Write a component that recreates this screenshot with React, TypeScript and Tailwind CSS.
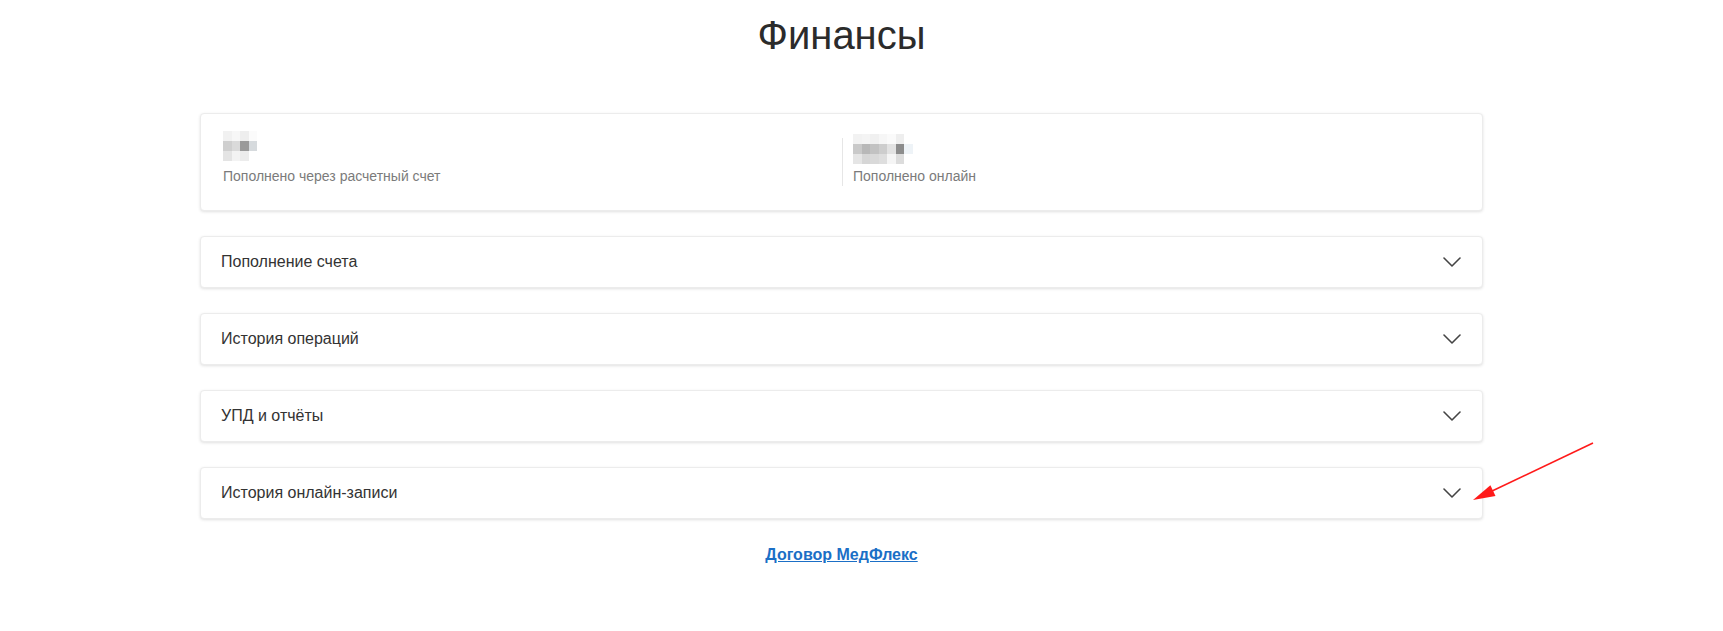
// blurred amounts, one row per line of pixel blocks
const blurLeft = [
  ["bg-[#f1f1f1]", "bg-[#f7f7f7]", "bg-[#eeeeee]", "bg-[#fbfbfb]"],
  ["bg-[#cfcfcf]", "bg-[#dadada]", "bg-[#9a9a9a]", "bg-[#d6dadd]"],
  ["bg-[#e4e4e4]", "bg-[#f3f3f3]", "bg-[#ececec]", "bg-white"],
];

const blurRight = [
  ["bg-[#f2f2f2]", "bg-[#f4f4f4]", "bg-[#f0f0f0]", "bg-[#f6f6f6]", "bg-[#fafafa]", "bg-[#eeeeee]", "bg-white"],
  ["bg-[#c9c9c9]", "bg-[#b8b8b8]", "bg-[#c2c2c2]", "bg-[#cdcdcd]", "bg-[#e2e2e2]", "bg-[#8c8c8c]", "bg-[#eef3f7]"],
  ["bg-[#e5e5e5]", "bg-[#d6d6d6]", "bg-[#d9d9d9]", "bg-[#dedede]", "bg-[#f5f5f5]", "bg-[#dcdcdc]", "bg-white"],
];

const sections = ["Пополнение счета", "История операций", "УПД и отчёты", "История онлайн-записи"];

function Blur({ rows }: { rows: string[][] }) {
  return (
    <div className="flex flex-col">
      {rows.map((row, i) => (
        <div key={i} className="flex">
          {row.map((c, j) => (
            <div key={j} className={`w-[8.5px] h-[10px] ${c}`} />
          ))}
        </div>
      ))}
    </div>
  );
}

function Chevron() {
  return (
    <svg width="18" height="10" viewBox="0 0 18 10" fill="none">
      <polyline points="1,1 9,9 17,1" stroke="#444444" strokeWidth="1.6" strokeLinecap="round" strokeLinejoin="round" />
    </svg>
  );
}

function Accordion({ title }: { title: string }) {
  return (
    <div className="h-[52px] flex items-center justify-between pl-[20px] pr-[21px] bg-white border border-[#ececec] rounded-[4px] shadow-[0_1px_3px_rgba(0,0,0,0.12)]">
      <span className="text-[16px] text-[#333333]">{title}</span>
      <Chevron />
    </div>
  );
}

export default function App() {
  return (
    <div
      className="relative min-h-[631px] bg-white flex justify-center pr-[40px]"
      style={{ fontFamily: '"Liberation Sans", Arial, sans-serif' }}
    >
      <div className="w-[1283px] flex flex-col">
        <h1 className="mt-[11px] text-center text-[40px] leading-[48px] font-normal text-[#2b2b2b]">Финансы</h1>

        <div className="mt-[54px] flex flex-col gap-[25px]">
          <div className="h-[98px] flex bg-white border border-[#ececec] rounded-[4px] shadow-[0_1px_3px_rgba(0,0,0,0.12)]">
            <div className="w-[641px] shrink-0 flex flex-col gap-[6px] pl-[22px] pt-[17px]">
              <Blur rows={blurLeft} />
              <span className="text-[14px] leading-[18px] text-[#7b7b7b]">Пополнено через расчетный счет</span>
            </div>
            <div className="flex-1 flex items-start">
              <div className="w-px h-[48px] mt-[24px] bg-[#e6e6e6]" />
              <div className="flex flex-col gap-[3px] pl-[10px] pt-[20px]">
                <Blur rows={blurRight} />
                <span className="text-[14px] leading-[18px] text-[#7b7b7b]">Пополнено онлайн</span>
              </div>
            </div>
          </div>

          {sections.map((s) => (
            <Accordion key={s} title={s} />
          ))}
        </div>

        <div className="mt-[24px] text-center">
          <a href="#" className="text-[16px] leading-[20px] font-bold text-[#1b6fc6] underline">
            Договор МедФлекс
          </a>
        </div>
      </div>

      <svg className="absolute left-0 top-0 pointer-events-none" width="1723" height="631">
        <line x1="1593" y1="443" x2="1490" y2="492" stroke="#ff1a1a" strokeWidth="1.6" />
        <polygon points="1473,500 1495.5,496 1490.4,485.2" fill="#ff1a1a" />
      </svg>
    </div>
  );
}
